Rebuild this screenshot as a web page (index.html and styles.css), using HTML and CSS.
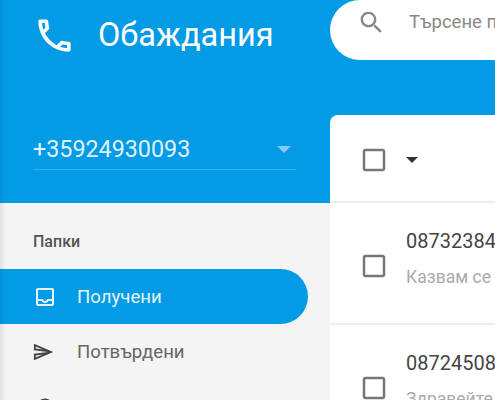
FILE: index.html
```html
<!DOCTYPE html>
<html lang="bg">
<head>
    <meta charset="UTF-8">
    <meta name="viewport" content="width=device-width, initial-scale=1.0">
    <title>Обаждания</title>
    <link rel="stylesheet" href="styles.css">
</head>
<body>
    <div class="app">
        <aside class="sidebar">
            <div class="sidebar-head">
                <div class="brand">
                    <svg class="brand-icon" viewBox="0 0 24 24"><path d="M6.54 5c.06.89.21 1.76.45 2.59l-1.2 1.2c-.41-1.2-.67-2.47-.76-3.79h1.51m9.86 12.02c.85.24 1.72.39 2.6.45v1.49c-1.32-.09-2.59-.35-3.8-.75l1.2-1.19M7.5 3H4c-.55 0-1 .45-1 1 0 9.39 7.61 17 17 17 .55 0 1-.45 1-1v-3.49c0-.55-.45-1-1-1-1.24 0-2.45-.2-3.57-.57-.1-.04-.21-.05-.31-.05-.26 0-.51.1-.71.29l-2.2 2.2c-2.83-1.45-5.15-3.76-6.59-6.59l2.2-2.2c.28-.28.36-.67.25-1.02C8.7 6.45 8.5 5.25 8.5 4c0-.55-.45-1-1-1z"/></svg>
                    <h1>Обаждания</h1>
                </div>
                <div class="number-select">
                    <span>+35924930093</span>
                    <i class="number-arrow"></i>
                </div>
            </div>
            <nav class="folders">
                <div class="folders-title">Папки</div>
                <a class="folder active">
                    <svg viewBox="0 0 24 24"><path d="M19 3H5c-1.1 0-2 .9-2 2v14c0 1.1.9 2 2 2h14c1.1 0 2-.9 2-2V5c0-1.1-.9-2-2-2zm0 16H5v-3h3.56c.69 1.19 1.97 2 3.45 2s2.75-.81 3.45-2H19v3zm0-5h-4.99c0 1.1-.9 2-2 2s-2-.9-2-2H5V5h14v9z"/></svg>
                    <span>Получени</span>
                </a>
                <a class="folder">
                    <svg viewBox="1 -1 26 26"><path d="M4.01 6.03l7.51 3.22-7.52-1 .01-2.22m7.5 8.72L4 17.97v-2.22l7.51-1M2.01 3L2 10l15 2-15 2 .01 7L23 12 2.01 3z"/></svg>
                    <span>Потвърдени</span>
                </a>
                <a class="folder">
                    <svg viewBox="0 0 24 24"><circle cx="12" cy="12" r="8.5"/></svg>
                    <span>Пропуснати</span>
                </a>
            </nav>
        </aside>
        <main class="content">
            <div class="search">
                <svg viewBox="0 0 24 24"><path d="M15.5 14h-.79l-.28-.27C15.41 12.59 16 11.11 16 9.5 16 5.91 13.09 3 9.5 3S3 5.91 3 9.5 5.91 16 9.5 16c1.61 0 3.09-.59 4.23-1.57l.27.28v.79l5 4.99L20.49 19l-4.99-5zm-6 0C7.01 14 5 11.99 5 9.5S7.01 5 9.5 5 14 7.01 14 9.5 11.99 14 9.5 14z"/></svg>
                <span>Търсене по номер</span>
            </div>
            <section class="card">
                <div class="toolbar">
                    <svg class="checkbox" viewBox="0 0 24 24"><path d="M19 5v14H5V5h14m0-2H5c-1.1 0-2 .9-2 2v14c0 1.1.9 2 2 2h14c1.1 0 2-.9 2-2V5c0-1.1-.9-2-2-2z"/></svg>
                    <i class="toolbar-arrow"></i>
                </div>
                <div class="row">
                    <svg class="checkbox" viewBox="0 0 24 24"><path d="M19 5v14H5V5h14m0-2H5c-1.1 0-2 .9-2 2v14c0 1.1.9 2 2 2h14c1.1 0 2-.9 2-2V5c0-1.1-.9-2-2-2z"/></svg>
                    <div class="row-text">
                        <div class="row-number">0873238412</div>
                        <div class="row-message">Казвам се Иван и търся</div>
                    </div>
                </div>
                <div class="row">
                    <svg class="checkbox" viewBox="0 0 24 24"><path d="M19 5v14H5V5h14m0-2H5c-1.1 0-2 .9-2 2v14c0 1.1.9 2 2 2h14c1.1 0 2-.9 2-2V5c0-1.1-.9-2-2-2z"/></svg>
                    <div class="row-text">
                        <div class="row-number">0872450813</div>
                        <div class="row-message">Здравейте, обаждам се</div>
                    </div>
                </div>
            </section>
        </main>
    </div>
</body>
</html>
```

FILE: styles.css
```css
* {
    box-sizing: border-box;
}

body {
    margin: 0;
    font-family: 'Roboto', sans-serif;
    background-color: #f4f4f4;
    overflow: hidden;
}

.app {
    position: relative;
    display: flex;
    width: 495px;
    height: 400px;
    overflow: hidden;
}

/* soft shadow along the window's left edge */
.app::before {
    content: "";
    position: absolute;
    top: 0;
    bottom: 0;
    left: 0;
    width: 6px;
    background-image: linear-gradient(90deg, rgba(0, 0, 0, 0.08), rgba(0, 0, 0, 0));
}

.sidebar {
    flex: 0 0 330px;
    background-color: #f4f4f4;
}

.sidebar-head {
    height: 203px;
    padding: 11px 34px 0 33px;
    background-color: #039be5;
    color: #fff;
}

.brand {
    display: flex;
    align-items: center;
    gap: 22px;
    height: 48px;
}

.brand-icon {
    flex: none;
    width: 43px;
    height: 43px;
    fill: #fff;
}

.brand h1 {
    margin: 0;
    font-size: 32.5px;
    font-weight: 400;
}

.number-select {
    display: flex;
    align-items: center;
    justify-content: space-between;
    height: 41px;
    margin-top: 70px;
    padding-right: 5px;
    border-bottom: 1px solid rgba(255, 255, 255, 0.2);
    font-size: 23.3px;
    color: rgba(255, 255, 255, 0.9);
}

.number-arrow {
    border-left: 7px solid transparent;
    border-right: 7px solid transparent;
    border-top: 7px solid rgba(255, 255, 255, 0.5);
}

.folders-title {
    padding: 29px 0 0 33px;
    height: 66px;
    font-size: 16px;
    font-weight: 500;
    color: #555;
}

.folder {
    display: flex;
    align-items: center;
    gap: 20px;
    width: 308px;
    height: 55px;
    padding-left: 33px;
    border-radius: 0 28px 28px 0;
    font-size: 18.6px;
    color: #666;
}

.folder svg {
    flex: none;
    width: 24px;
    height: 24px;
    fill: #444;
}

.folder.active {
    background-color: #039be5;
    color: #e6f5fd;
}

.folder.active svg {
    fill: #e6f5fd;
}

.content {
    flex: 1;
    min-width: 0;
    background-color: #039be5;
}

.search {
    display: flex;
    align-items: center;
    gap: 23px;
    width: 400px;
    height: 60px;
    padding: 0 0 16px 27px;
    border-radius: 30px 0 0 30px;
    background-color: #fff;
    font-size: 18.5px;
    color: #888;
    white-space: nowrap;
}

.search svg {
    flex: none;
    width: 29px;
    height: 29px;
    fill: #888;
}

.card {
    width: 400px;
    height: 285px;
    margin-top: 55px;
    border-radius: 8px 0 0 0;
    background-color: #fff;
}

.toolbar {
    display: flex;
    align-items: center;
    gap: 17px;
    height: 88px;
    padding: 4px 0 0 29px;
    border-bottom: 2px solid #eee;
}

.checkbox {
    flex: none;
    width: 30px;
    height: 30px;
    fill: #777;
}

.toolbar-arrow {
    border-left: 6px solid transparent;
    border-right: 6px solid transparent;
    border-top: 6px solid #333;
}

.row {
    display: flex;
    align-items: center;
    gap: 17px;
    height: 122px;
    padding-left: 29px;
    border-bottom: 2px solid #eee;
    white-space: nowrap;
}

.row .checkbox {
    margin-top: 6px;
}

.row-text {
    margin-bottom: 10px;
}

.row-number {
    font-size: 20px;
    color: #444;
}

.row-message {
    margin-top: 14px;
    font-size: 17.5px;
    color: #aaa;
}
```
